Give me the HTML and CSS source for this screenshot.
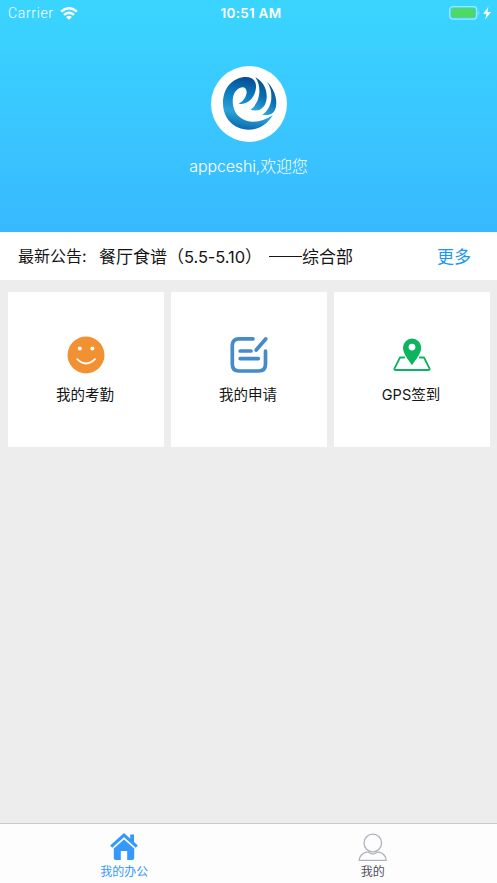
FILE: index.html
```
<!DOCTYPE html>
<html lang="zh-CN">
<head>
<meta charset="utf-8">
<title>我的办公</title>
<link rel="stylesheet" href="styles.css">
</head>
<body>
<div class="app">
  <header class="hero">
    <div class="status">
      <div class="carrier"><span>Carrier</span>
        <svg width="18" height="13" viewBox="0 0 18 13" fill="none" stroke="#fff" stroke-width="2.4"><path d="M1.2 4.6Q9-2.2 16.8 4.6M4 7.9Q9 3.7 14 7.9"/><path d="M6.1 9.9Q9 7.7 11.9 9.9L9 12.7Z" fill="#fff" stroke="none"/></svg>
      </div>
      <div class="time">10:51 AM</div>
      <svg class="battery" width="43" height="14" viewBox="0 0 43 14"><rect x=".7" y=".7" width="27" height="12.4" rx="3" fill="none" stroke="#a1e9ff" stroke-width="1.2"/><rect x="2.3" y="2.2" width="23.9" height="9.4" rx="1.5" fill="#4cd964"/><path d="M29.3 4.7q2 2.2 0 4.5z" fill="#a1e9ff"/><path d="M39.3 .8L34.3 7.8h3.2L36.2 13.4l5.8-7.5h-3.5z" fill="#fff"/></svg>
    </div>
    <div class="avatar">
      <svg width="76" height="76" viewBox="-22 -21 228 228">
        <defs>
          <linearGradient id="ring" gradientUnits="userSpaceOnUse" x1="106" y1="16" x2="76" y2="170"><stop offset="0" stop-color="#064b91"/><stop offset=".35" stop-color="#0b7dbf"/><stop offset=".7" stop-color="#2ba3d9"/><stop offset="1" stop-color="#0a67aa"/></linearGradient>
          <linearGradient id="blade" x1=".6" y1="0" x2=".3" y2="1"><stop offset="0" stop-color="#05508f"/><stop offset=".5" stop-color="#086eb1"/><stop offset="1" stop-color="#2fa6da"/></linearGradient>
        </defs>
        <path d="M163 127C146 156 120 170 91 170C46 170 14 136 14 91C14 44 44 12 84 12C104 12 114 25 113 43C111 73 89 97 61 92C74 86 84 73 85 58C85 44 75 39 64 45C47 53 41 72 44 96C50 142 106 165 163 127Z" fill="url(#ring)"/>
        <path d="M111 13C132 24 147 47 145 74C143 102 125 119 96 110C111 100 121 82 123 60C124 42 120 25 111 13Z" fill="url(#blade)"/>
        <path d="M146 27C165 44 178 76 173 101C169 120 155 130 132 125C148 115 158 97 159 75C160 56 156 40 146 27Z" fill="url(#blade)"/>
      </svg>
    </div>
    <div class="welcome">appceshi,欢迎您</div>
  </header>
  <section class="notice"><span class="label">最新公告:</span><span class="headline">餐厅食谱（<span class="dates">5.5-5.10</span><span class="close">）</span><i class="dash"></i>综合部</span><a class="more">更多</a></section>
  <main class="cards">
    <div class="card">
      <svg width="40" height="40" viewBox="0 0 40 40"><circle cx="20" cy="20" r="18.5" fill="#f29132"/><circle cx="13.8" cy="13.5" r="2" fill="#fff"/><circle cx="26.4" cy="13.5" r="2" fill="#fff"/><path d="M11.2 24.2Q20 32.8 29 24.2" fill="none" stroke="#fff" stroke-width="1.7" stroke-linecap="round"/></svg>
      <span>我的考勤</span>
    </div>
    <div class="card">
      <svg width="40" height="40" viewBox="0 0 40 40" fill="none" stroke="#438bcb" stroke-width="3.7" stroke-linecap="round" stroke-linejoin="round"><path d="M24 3.8H10Q3.3 3.8 3.3 10.5V29.3Q3.3 36 10 36H29.8Q36.5 36 36.5 29.3V16.2M11.2 16H22M11.2 23.6H29.3M27.2 15L36.7 4"/></svg>
      <span>我的申请</span>
    </div>
    <div class="card">
      <svg width="40" height="40" viewBox="0 0 40 40"><path d="M12.2 22.5H8L2.4 33.6Q2 35 3.6 35H36.4Q38 35 37.6 33.6L32 22.5H27.8" fill="none" stroke="#0bb45e" stroke-width="1.8" stroke-linecap="round" stroke-linejoin="round"/><path fill="#0bb45e" fill-rule="evenodd" d="M20 30.3C16.5 25 11 19 11 12.6A9.1 9.1 0 0 1 29.2 12.6C29.2 19 23.5 25 20 30.3ZM20 8.7a3.4 3.4 0 1 0 0 6.8a3.4 3.4 0 1 0 0-6.8Z"/></svg>
      <span>GPS签到</span>
    </div>
  </main>
  <nav class="tabs">
    <div class="tab active">
      <svg width="30" height="30" viewBox="0 0 30 30"><path d="M2.2 15.7L15 4.2L27.8 15.7" fill="none" stroke="#3598fb" stroke-width="3.1"/><path d="M21.2 3.5H25V12.5L21.2 9ZM4.8 17.6L15 8.5L25.2 17.6V27Q25.2 29 23.3 29H18.2V20H11.8V29H6.7Q4.8 29 4.8 27Z" fill="#3598fb"/></svg>
      <span>我的办公</span>
    </div>
    <div class="tab">
      <svg width="30" height="30" viewBox="0 0 30 30" fill="none" stroke="#afb2bb" stroke-width="1.3"><circle cx="14.8" cy="12" r="8.8"/><path d="M8.5 21.2Q10.5 20.8 12.5 22.2Q14.8 23.7 17.1 22.2Q19.1 20.8 21.1 21.2Q27.5 22.8 28.2 29.3H1.1Q2.1 22.8 8.5 21.2Z" stroke-linejoin="round"/></svg>
      <span>我的</span>
    </div>
  </nav>
</div>
</body>
</html>
```
FILE: styles.css
```
* { box-sizing: border-box; }
body { margin: 0; font-family: Inter, "Noto Sans CJK SC", sans-serif; color: #151515; }
.app { height: 883px; display: flex; flex-direction: column; background: #ededed; overflow: hidden; }
svg { display: block; flex: none; }
.hero { height: 232px; flex: none; display: flex; flex-direction: column; align-items: center; color: #fff; background: linear-gradient(#3ad5ff, #38b9ff); }
.status { width: 100%; height: 26px; display: grid; grid-template-columns: 1fr 80px 1fr; align-items: center; padding: 0 5px 0 8px; }
.carrier { display: flex; align-items: center; gap: 6px; font-family: Roboto, sans-serif; font-size: 14px; letter-spacing: .65px; font-weight: 300; }
.time { padding-left: 2px; text-align: center; font-weight: 600; font-size: 13.5px; white-space: nowrap; letter-spacing: .25px; }
.battery { justify-self: end; }
.avatar { width: 76px; height: 76px; border-radius: 50%; background: #fff; margin-top: 40px; }
.welcome { margin-top: 12px; height: 24px; line-height: 24px; font-size: 16px; font-weight: 300; letter-spacing: -.15px; white-space: nowrap; }
.notice { height: 48px; flex: none; display: flex; align-items: center; padding: 0 26px 2px 18px; background: #fff; white-space: nowrap; font-size: 17px; }
.label { width: 81px; font-size: 16px; }
.dates { font-size: 16.5px; letter-spacing: -.1px; }
.close { display: inline-block; width: 24px; }
.dash { display: inline-block; vertical-align: 6px; width: 33px; height: 1px; background: #151515; }
.more { margin-left: auto; color: #1b95f6; }
.cards { display: grid; grid-template-columns: repeat(3, 156px); gap: 7px; padding: 12px 7.5px; }
.card { height: 155px; background: #fff; display: flex; flex-direction: column; align-items: center; padding-top: 43px; font-size: 14.5px; }
.card span { margin-top: 9px; margin-left: -1px; line-height: 22px; }
.tabs { margin-top: auto; height: 60px; flex: none; display: grid; grid-template-columns: 1fr 1fr; border-top: 1px solid #c9c9c9; background: #fdfdfd; }
.tab { display: flex; flex-direction: column; align-items: center; padding-top: 7px; color: #4c505c; font-size: 12px; }
.tab span { margin-top: 1px; line-height: 19px; }
.tab.active { color: #3598fb; }
```
